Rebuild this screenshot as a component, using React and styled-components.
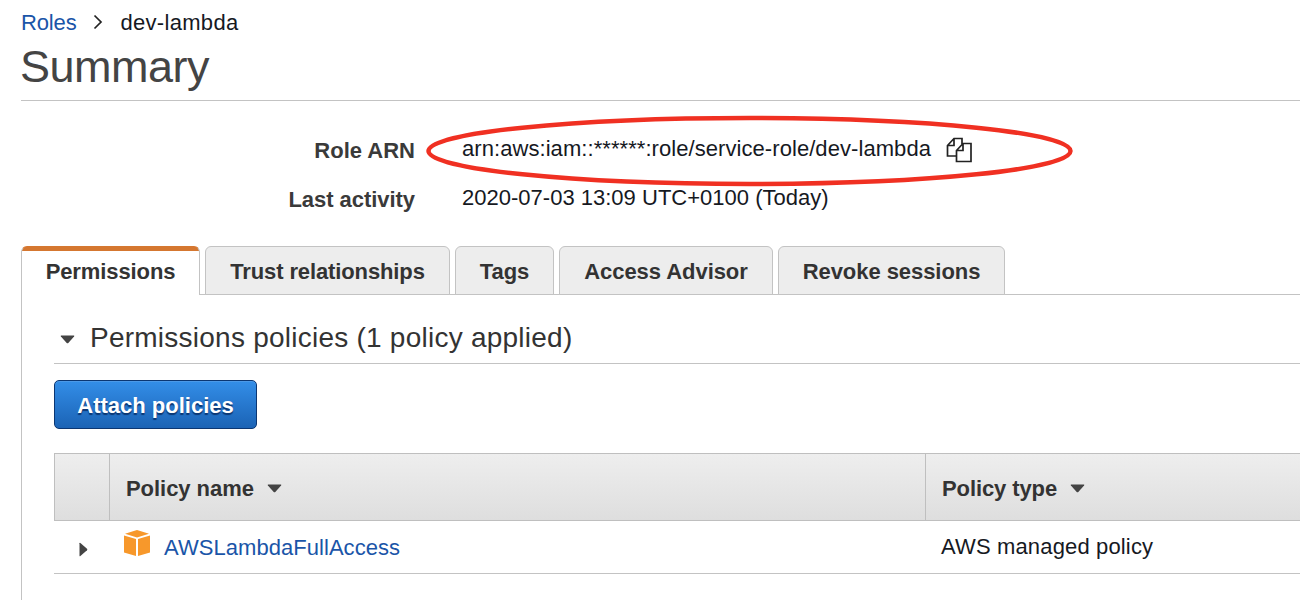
import React from 'react';
import styled, { createGlobalStyle } from 'styled-components';

const GlobalStyle = createGlobalStyle`
  * { box-sizing: border-box; }
  body {
    margin: 0;
    background: #fff;
    overflow: hidden;
    font-family: "Liberation Sans", Arial, sans-serif;
    font-size: 22px;
    color: #16191f;
  }
`;

const Page = styled.main`
  display: flex;
  flex-direction: column;
  width: 1300px;
  height: 600px;
  padding-left: 21px;
  overflow: hidden;
`;

const Label = styled.span`
  white-space: nowrap;
  letter-spacing: ${(p) => p.$track || 0}px;
`;

const Breadcrumb = styled.nav`
  display: flex;
  align-items: center;
  height: 45px;
  line-height: 45px;
`;

const Link = styled.a`
  color: #1a55a8;
  text-decoration: none;
  white-space: nowrap;
  letter-spacing: ${(p) => p.$track || 0}px;
`;

const Chevron = styled.svg`
  width: 10px;
  height: 16px;
  margin: 0 18px 1px 16px;
`;

const Title = styled.h1`
  margin: 0 0 0 -1px;
  font-size: 45px;
  font-weight: 400;
  line-height: 43px;
  letter-spacing: -0.5px;
  color: #444;
`;

const TitleBar = styled.header`
  height: 56px;
  border-bottom: 1px solid #c3c3c3;
`;

const Details = styled.dl`
  display: grid;
  grid-template-columns: 394px 1fr;
  grid-auto-rows: 49px;
  column-gap: 47px;
  height: 145px;
  margin: 0;
  padding-top: 23px;
  line-height: 49px;
`;

const Term = styled.dt`
  padding-top: 2px;
  font-weight: 700;
  text-align: right;
  color: #3a3a3a;
  letter-spacing: ${(p) => p.$track || 0}px;
`;

const Value = styled.dd`
  display: flex;
  position: relative;
  align-items: center;
  margin: 0;
`;

const CopyIcon = styled.svg`
  width: 26px;
  height: 26px;
  margin: 2px 0 0 15px;
`;

const Highlight = styled.svg`
  position: absolute;
  top: -10px;
  left: -37px;
  width: 650px;
  height: 74px;
`;

const Tabs = styled.div`
  display: flex;
  position: relative;
  gap: 5px;
  height: 49px;
  margin-bottom: -1px;
`;

const Tab = styled.button`
  width: ${(p) => p.$width}px;
  height: 49px;
  padding: 0;
  border: 1px solid #c3c3c3;
  border-bottom: ${(p) => (p.$active ? '0' : '1px solid #c3c3c3')};
  border-radius: 6px 6px 0 0;
  background: ${(p) => (p.$active ? 'linear-gradient(#d57730 4px, #fff 4px)' : '#ededed')};
  ${(p) => p.$active && 'border-top: 1px solid #d57730;'}
  font: 700 22px/50px "Liberation Sans", Arial, sans-serif;
  letter-spacing: ${(p) => p.$track}px;
  color: #333;
  white-space: nowrap;
`;

const Panel = styled.section`
  flex: 1;
  padding: 20px 0 0 32px;
  border-top: 1px solid #c3c3c3;
  border-left: 1px solid #c3c3c3;
`;

const SectionTitle = styled.h2`
  display: flex;
  align-items: center;
  height: 49px;
  margin: 0;
  padding-left: 6px;
  border-bottom: 1px solid #c3c3c3;
  font-size: 28px;
  font-weight: 400;
  line-height: 46px;
  color: #333;
`;

const SectionLabel = styled.span`
  margin-left: 15px;
  padding-bottom: 2px;
  letter-spacing: 0.24px;
  white-space: nowrap;
`;

const Caret = styled.svg`
  width: ${(p) => (p.$right ? 9 : 15)}px;
  height: ${(p) => (p.$right ? 15 : 9)}px;
  flex: none;
  fill: #444;
`;

const PrimaryButton = styled.button`
  display: block;
  width: 203px;
  height: 49px;
  margin: 16px 0 24px;
  padding: 0;
  border: 1px solid #0b3672;
  border-radius: 5px;
  background: linear-gradient(#338ee8, #1b63b5);
  box-shadow: inset 0 1px 0 #4b99e8;
  color: #fff;
  font: 700 22px/50px "Liberation Sans", Arial, sans-serif;
  text-shadow: 0 2px 1px #0b3672;
`;

const Row = styled.div`
  display: grid;
  grid-template-columns: 56px 816px 1fr;
  height: 53px;
  border-bottom: 1px solid #c3c3c3;
`;

const HeaderRow = styled(Row)`
  height: 68px;
  border: 1px solid #bfbfbf;
  border-right: 0;
  grid-template-columns: 54px 816px 1fr;
  background: linear-gradient(#eee, #dedede);
`;

const HeaderCell = styled.div`
  display: flex;
  align-items: center;
  gap: 13px;
  padding: 3px 0 0 16px;
  font-weight: 700;
  color: #333;
  ${(p) => p.$divided && 'border-left: 1px solid #bfbfbf;'}
`;

const Cell = styled.div`
  display: flex;
  align-items: center;
  padding-left: ${(p) => p.$indent}px;
  padding-top: ${(p) => p.$drop || 0}px;
`;

const PolicyIcon = styled.svg`
  width: 26px;
  height: 26px;
  margin: 0 14px 9px 0;
`;

function DownCaret() {
  return (
    <Caret viewBox="0 0 15 9">
      <path d="M1.2.5h12.6q.9.2.3.9L8.3 7.9q-.8.7-1.6 0L.9 1.4Q.4.7 1.2.5Z" />
    </Caret>
  );
}

const tabs = [
  { label: 'Permissions', width: 179, track: -0.1, active: true },
  { label: 'Trust relationships', width: 245, track: -0.12 },
  { label: 'Tags', width: 99, track: 0 },
  { label: 'Access Advisor', width: 214, track: -0.05 },
  { label: 'Revoke sessions', width: 227, track: -0.06 },
];

export default function App() {
  return (
    <>
      <GlobalStyle />
      <Page>
        <Breadcrumb>
          <Link href="#" $track={-0.15}>Roles</Link>
          <Chevron viewBox="0 0 10 16" fill="none" stroke="#222" strokeWidth="1.7">
            <path d="M1.5 1.5 8 8l-6.5 6.5" />
          </Chevron>
          <Label $track={0.3}>dev-lambda</Label>
        </Breadcrumb>
        <TitleBar>
          <Title>Summary</Title>
        </TitleBar>
        <Details>
          <Term>Role ARN</Term>
          <Value>
            <Label $track={0.065}>arn:aws:iam::******:role/service-role/dev-lambda</Label>
            <CopyIcon viewBox="0 0 26 26" fill="none" stroke="#222" strokeWidth="1.7">
              <path d="M10.5 19H1.5V8.5L8 1.5h8V7M8 1.5v7H1.5" />
              <path d="M10.5 13.5 17 6.5h8v18H10.5ZM17 6.5v7h-6.5" />
            </CopyIcon>
            <Highlight viewBox="0 0 650 74" fill="none" stroke="#f03022" strokeWidth="4.5">
              <ellipse cx="324.5" cy="37" rx="321" ry="33" />
            </Highlight>
          </Value>
          <Term $track={-0.05}>Last activity</Term>
          <Value>
            <Label $track={0.01}>2020-07-03 13:09 UTC+0100 (Today)</Label>
          </Value>
        </Details>
        <Tabs>
          {tabs.map((t) => (
            <Tab key={t.label} $width={t.width} $track={t.track} $active={t.active}>
              {t.label}
            </Tab>
          ))}
        </Tabs>
        <Panel>
          <SectionTitle>
            <DownCaret />
            <SectionLabel>Permissions policies (1 policy applied)</SectionLabel>
          </SectionTitle>
          <PrimaryButton>Attach policies</PrimaryButton>
          <HeaderRow>
            <HeaderCell />
            <HeaderCell $divided>
              <Label $track={-0.05}>Policy name</Label>
              <DownCaret />
            </HeaderCell>
            <HeaderCell $divided>
              <Label $track={-0.1}>Policy type</Label>
              <DownCaret />
            </HeaderCell>
          </HeaderRow>
          <Row>
            <Cell $indent={25} $drop={4}>
              <Caret $right viewBox="0 0 9 15">
                <path d="M.5 1.2v12.6q.2.9.9.3L8 8.3q.7-.8 0-1.6L1.4.9Q.7.4.5 1.2Z" />
              </Caret>
            </Cell>
            <Cell $indent={14} $drop={1}>
              <PolicyIcon viewBox="0 0 26 26" fill="#f7982b">
                <path d="M13 0 25 3.8 13 7.5 1 3.8ZM0 5.5 12 9v17L0 22.5ZM26 5.5 14 9v17l12-3.5Z" />
              </PolicyIcon>
              <Link href="#" $track={0.05}>AWSLambdaFullAccess</Link>
            </Cell>
            <Cell $indent={15}>
              <Label $track={0.15}>AWS managed policy</Label>
            </Cell>
          </Row>
        </Panel>
      </Page>
    </>
  );
}
